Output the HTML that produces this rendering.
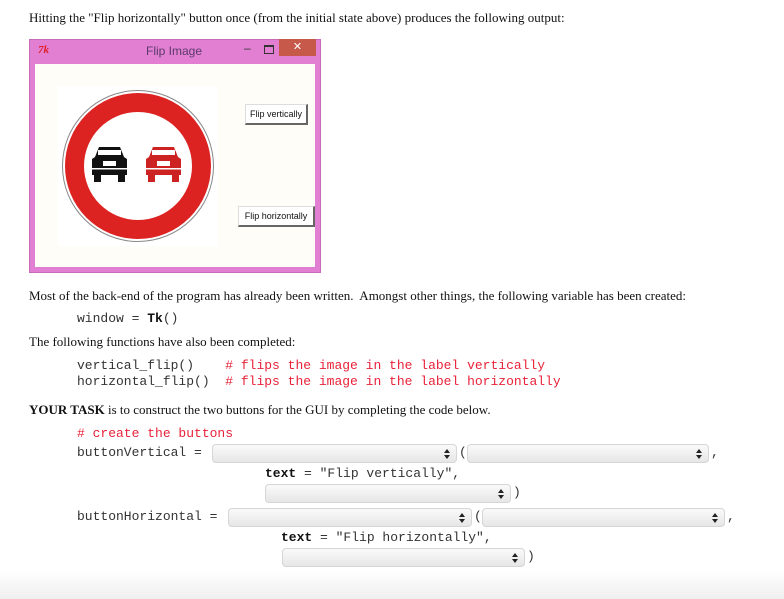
<!DOCTYPE html>
<html><head><meta charset="utf-8"><style>
body{margin:0;width:784px;height:599px;position:relative;background:#fff;overflow:hidden;font-family:"Liberation Serif",serif;font-size:13px;color:#111}
.a{position:absolute;white-space:pre}
.m{font-family:"Liberation Mono",monospace;font-size:13px;color:#333}
.r{color:#e8233a}
.sel{position:absolute;height:19px;border:1px solid #d6d6d6;border-radius:4px;background:linear-gradient(#fafafa,#e6e6e6);box-sizing:border-box}
.sel:after{content:"";position:absolute;right:6px;top:4px;width:0;height:0;border-left:3px solid transparent;border-right:3px solid transparent;border-bottom:4px solid #222}
.sel:before{content:"";position:absolute;right:6px;top:10px;width:0;height:0;border-left:3px solid transparent;border-right:3px solid transparent;border-top:4px solid #222}
.btn{position:absolute;background:#fff;border-right:2px solid #666;border-bottom:2px solid #666;border-top:1px solid #ddd;border-left:1px solid #ddd;font-family:"Liberation Sans",sans-serif;font-size:9px;text-align:center;line-height:19px;box-sizing:border-box;color:#111}
</style></head><body>
<div class="a" style="left:29px;top:10px">Hitting the "Flip horizontally" button once (from the initial state above) produces the following output:</div>
<div style="position:absolute;left:29px;top:39px;width:292px;height:234px;background:#e27fd2;border:1px solid #c66bb8;box-sizing:border-box"></div>
<div class="a" style="left:38px;top:44px;color:#e0202a;font-size:11px;font-weight:bold;font-style:italic">7k</div>
<div class="a" style="left:146px;top:44px;font-family:'Liberation Sans',sans-serif;font-size:12px;color:#5a3a6a">Flip Image</div>
<div class="a" style="left:244px;top:41px;font-family:'Liberation Sans',sans-serif;font-size:12px;color:#333">–</div>
<div style="position:absolute;left:264px;top:45px;width:8px;height:6px;border:1px solid #333;border-top-width:2px"></div>
<div style="position:absolute;left:279px;top:39px;width:37px;height:17px;background:#c7594a;color:#fff;font-family:'Liberation Sans',sans-serif;font-size:11px;text-align:center;line-height:17px">✕</div>
<div style="position:absolute;left:35px;top:64px;width:280px;height:203px;background:#fffdf8"></div>
<div style="position:absolute;left:58px;top:86px;width:160px;height:160px;background:#fff"></div>
<svg style="position:absolute;left:58px;top:86px" width="160" height="160" viewBox="0 0 160 160">
<circle cx="80" cy="80" r="76" fill="#888"/>
<circle cx="80" cy="80" r="75" fill="#fff"/>
<circle cx="80" cy="80" r="73" fill="#dd2222"/>
<circle cx="80" cy="80" r="54" fill="#fff"/>
<g fill="#111"><path d="M37 71 L41 61 L62 61 L66 71 L69 73 L69 89 L34 89 L34 73 Z"/><rect x="36" y="89" width="7" height="7"/><rect x="60" y="89" width="7" height="7"/></g>
<rect x="45" y="75" width="13" height="5" fill="#fff"/><rect x="34" y="82" width="35" height="1.5" fill="#fff"/><rect x="40" y="64" width="23" height="5" fill="#fff"/>
<g fill="#cc2222"><path d="M91 71 L95 61 L116 61 L120 71 L123 73 L123 89 L88 89 L88 73 Z"/><rect x="90" y="89" width="7" height="7"/><rect x="114" y="89" width="7" height="7"/></g>
<rect x="99" y="75" width="13" height="5" fill="#fff"/><rect x="88" y="82" width="35" height="1.5" fill="#fff"/><rect x="94" y="64" width="23" height="5" fill="#fff"/>
</svg>
<div class="btn" style="left:245px;top:104px;width:63px;height:21px">Flip vertically</div>
<div class="btn" style="left:238px;top:206px;width:77px;height:21px">Flip horizontally</div>
<div class="a" style="left:29px;top:288px">Most of the back-end of the program has already been written.  Amongst other things, the following variable has been created:</div>
<div class="a m" style="left:77px;top:311px">window = <b style="color:#111">Tk</b>()</div>
<div class="a" style="left:29px;top:334px">The following functions have also been completed:</div>
<div class="a m" style="left:77px;top:358px">vertical_flip()    <span class="r"># flips the image in the label vertically</span></div>
<div class="a m" style="left:77px;top:374px">horizontal_flip()  <span class="r"># flips the image in the label horizontally</span></div>
<div class="a" style="left:29px;top:402px"><b>YOUR TASK</b> is to construct the two buttons for the GUI by completing the code below.</div>
<div class="a m r" style="left:77px;top:426px"># create the buttons</div>
<div class="a m" style="left:77px;top:445px">buttonVertical =</div>
<div class="sel" style="left:212px;top:444px;width:245px"></div><div class="a m" style="left:459px;top:445px">(</div>
<div class="sel" style="left:467px;top:444px;width:242px"></div><div class="a m" style="left:711px;top:445px">,</div>
<div class="a m" style="left:265px;top:466px"><b style="color:#111">text</b> = "Flip vertically",</div>
<div class="sel" style="left:265px;top:484px;width:246px"></div><div class="a m" style="left:513px;top:485px">)</div>
<div class="a m" style="left:77px;top:509px">buttonHorizontal =</div>
<div class="sel" style="left:228px;top:508px;width:244px"></div><div class="a m" style="left:474px;top:509px">(</div>
<div class="sel" style="left:482px;top:508px;width:243px"></div><div class="a m" style="left:727px;top:509px">,</div>
<div class="a m" style="left:281px;top:530px"><b style="color:#111">text</b> = "Flip horizontally",</div>
<div class="sel" style="left:282px;top:548px;width:243px"></div><div class="a m" style="left:527px;top:549px">)</div>
<div style="position:absolute;left:0;top:570px;width:784px;height:29px;background:linear-gradient(rgba(255,255,255,0),#efefef)"></div>
</body></html>
